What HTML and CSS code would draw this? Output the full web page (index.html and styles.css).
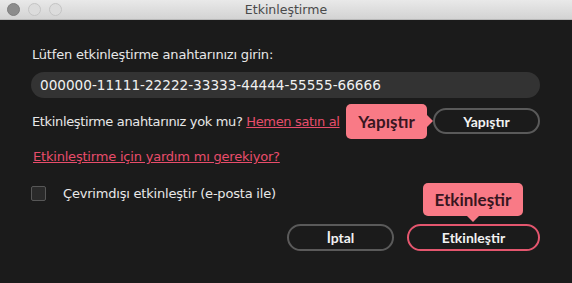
FILE: index.html
```html
<!DOCTYPE html>
<html lang="tr">
<head>
  <meta charset="utf-8">
  <link rel="stylesheet" href="styles.css">
</head>
<body>
  <div class="window">
    <div class="titlebar">
      <div class="lights">
        <span class="light light-close"></span>
        <span class="light"></span>
        <span class="light"></span>
      </div>
      <div class="title">Etkinleştirme</div>
    </div>

    <div class="content">
      <div class="label">Lütfen etkinleştirme anahtarınızı girin:</div>
      <div class="key-field">000000-11111-22222-33333-44444-55555-66666</div>

      <div class="row">
        <div class="text">Etkinleştirme anahtarınız yok mu? <a class="link" href="#">Hemen satın al</a></div>
        <div class="anchor">
          <span class="tip tip-left">Yapıştır</span>
          <button class="btn btn-paste">Yapıştır</button>
        </div>
      </div>

      <a class="link help" href="#">Etkinleştirme için yardım mı gerekiyor?</a>

      <label class="check">
        <span class="box"></span>
        <span class="text">Çevrimdışı etkinleştir (e-posta ile)</span>
      </label>

      <div class="actions">
        <button class="btn btn-cancel">İptal</button>
        <div class="anchor">
          <span class="tip tip-up">Etkinleştir</span>
          <button class="btn btn-primary">Etkinleştir</button>
        </div>
      </div>
    </div>
  </div>
</body>
</html>
```

FILE: styles.css
```css
body {
  margin: 0;
  background: #1b1b1b;
  font-family: "DejaVu Sans", Verdana, sans-serif;
}

.window {
  width: 572px;
  height: 283px;
  background: #1b1b1b;
}

.titlebar {
  height: 19px;
  background: linear-gradient(#e9e9e9, #d3d3d3);
  border-bottom: 1px solid #b8b8b8;
  display: flex;
  align-items: center;
  justify-content: center;
  position: relative;
}

.lights {
  position: absolute;
  left: 7px;
  top: 3px;
  display: flex;
  gap: 8px;
}

.light {
  width: 11px;
  height: 11px;
  border-radius: 50%;
  background: #dcdcdc;
  border: 1px solid #c4c4c4;
}

.light-close {
  background: #8c8c8c;
  border-color: #7e7e7e;
}

.title {
  font-size: 12.5px;
  color: #4a4a4a;
}

.content {
  padding: 0 32px 0 31px;
}

.label {
  margin-top: 27px;
  font-size: 13px;
  letter-spacing: -0.2px;
  color: #e8e8e8;
  padding-left: 1px;
  line-height: 16px;
}

.key-field {
  margin-top: 9px;
  height: 26px;
  line-height: 26px;
  border-radius: 13px;
  background: #333333;
  color: #f0f0f0;
  font-size: 13.6px;
  padding-left: 9px;
}

.row {
  margin-top: 10px;
  height: 26px;
  display: flex;
  align-items: center;
  justify-content: space-between;
}

.text {
  font-size: 13px;
  letter-spacing: -0.2px;
  color: #e8e8e8;
}

.row .text,
.row .link {
  letter-spacing: -0.35px;
}

.row .text {
  padding-left: 1px;
}

.link {
  color: #e84d6b;
  text-decoration: underline;
  font-size: 13px;
  letter-spacing: -0.2px;
}

.help {
  display: inline-block;
  margin-top: 15px;
  padding-left: 2px;
  line-height: 16px;
}

.anchor {
  position: relative;
}

.btn {
  font-family: Lato, "Open Sans", sans-serif;
  font-weight: 700;
  font-size: 14px;
  color: #f2f2f2;
  background: #1b1b1b;
  border: 2px solid #5a5a5a;
  border-radius: 14px;
  height: 27px;
  padding: 0;
  display: block;
}

.btn-paste {
  width: 107px;
  height: 26px;
}

.check {
  margin-top: 20px;
  display: flex;
  align-items: center;
  gap: 17px;
  height: 16px;
}

.box {
  width: 13px;
  height: 13px;
  border: 1px solid #575757;
  border-radius: 2px;
  background: #2a2a2a;
}

.actions {
  margin-top: 23px;
  display: flex;
  justify-content: flex-end;
  gap: 13px;
}

.btn-cancel {
  width: 107px;
}

.btn-primary {
  width: 133px;
  border-color: #e4566e;
}

.tip {
  position: absolute;
  background: #f97a86;
  color: #38161f;
  font-family: Lato, "Open Sans", sans-serif;
  font-weight: 700;
  font-size: 17px;
  border-radius: 5px;
  white-space: nowrap;
  display: flex;
  align-items: center;
  justify-content: center;
}

.tip::after {
  content: "";
  position: absolute;
  border: 6px solid transparent;
}

.tip-left {
  right: 113px;
  top: -4px;
  width: 81px;
  height: 35px;
}

.tip-left::after {
  left: 100%;
  top: 11px;
  border-left-color: #f97a86;
  border-right-width: 0;
}

.tip-up {
  left: 16px;
  bottom: 35px;
  width: 100px;
  height: 33px;
}

.tip-up::after {
  top: 100%;
  left: 44px;
  border-top-color: #f97a86;
  border-bottom-width: 0;
}
```
